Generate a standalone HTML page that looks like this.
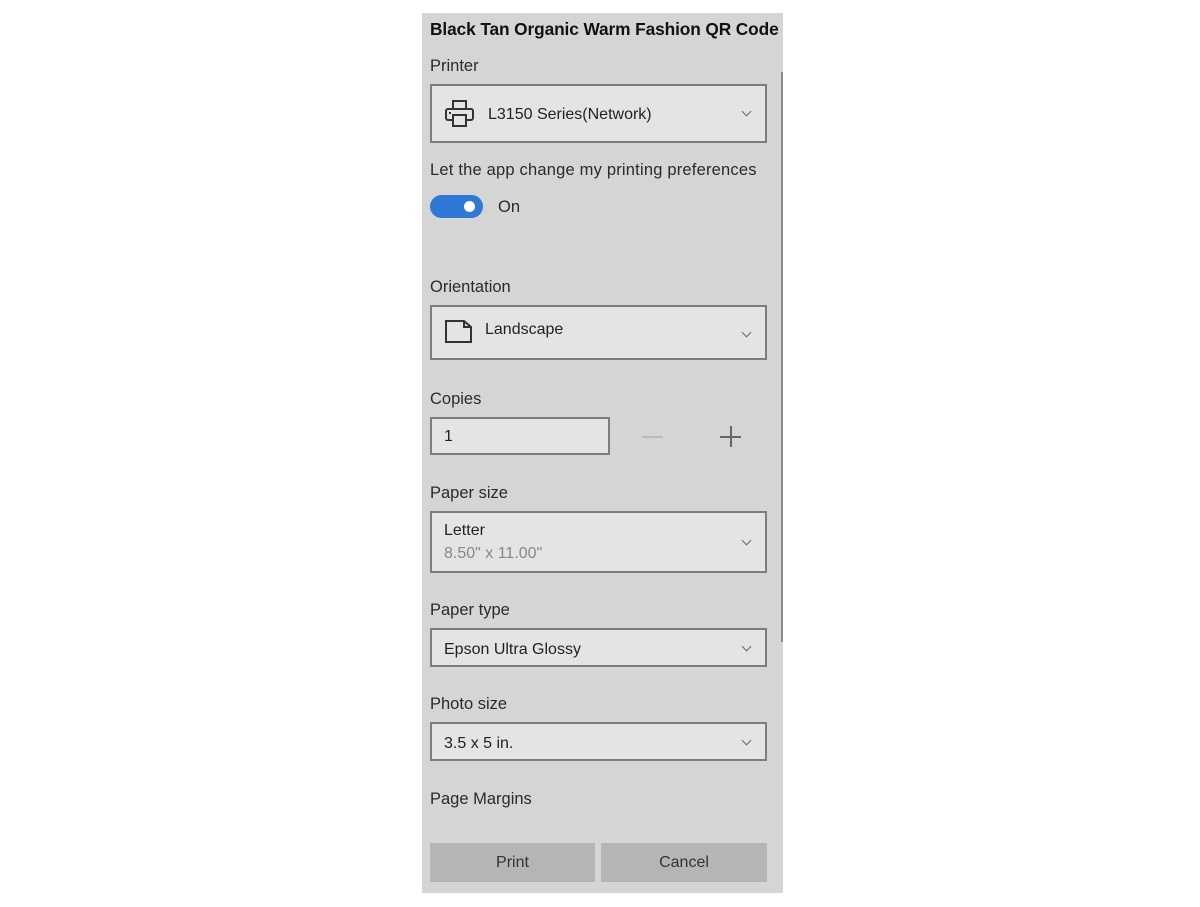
<!DOCTYPE html>
<html><head><style>
body{margin:0;width:1200px;height:907px;background:#fff;position:relative;overflow:hidden;font-family:"Liberation Sans",sans-serif;color:#222}
.p{position:absolute;left:422px;top:13px;width:361px;height:880px;background:#d5d5d5}
.a{position:absolute;white-space:nowrap}
.l{font-size:16.5px;color:#2a2a2a}
.box{position:absolute;left:430px;width:337px;background:#e4e4e4;border:2px solid #7d7d7d;box-sizing:border-box}
.chev{position:absolute;right:15px;width:6px;height:6px;border-right:1.3px solid #666;border-bottom:1.3px solid #666;transform:rotate(45deg)}
.t{font-size:16px;color:#222}
.btn{position:absolute;top:843px;height:39px;background:#b5b5b5;font-size:16px;color:#333;text-align:center;line-height:40px}
</style></head><body>
<div class="p"></div>
<div style="position:absolute;left:781px;top:72px;width:2px;height:570px;background:#8a8a8a"></div>
<div class="a" style="left:430px;top:19px;font-size:17.3px;font-weight:bold;color:#111;letter-spacing:-0.1px">Black Tan Organic Warm Fashion QR Code</div>
<div class="a l" style="left:430px;top:57px">Printer</div>
<div class="box" style="top:84px;height:59px"><div class="chev" style="top:22px"></div>
<svg style="position:absolute;left:12px;top:13px" width="32" height="30" viewBox="0 0 32 30" fill="none" stroke="#333" stroke-width="2"><rect x="9" y="2" width="13" height="8"/><rect x="2" y="10" width="27" height="11" rx="2"/><rect x="9" y="16" width="13" height="11" fill="#e4e4e4"/><line x1="5" y1="14" x2="7" y2="14"/></svg>
<div class="a t" style="left:56px;top:20px">L3150 Series(Network)</div></div>
<div class="a l" style="left:430px;top:161px;letter-spacing:0.2px">Let the app change my printing preferences</div>
<div style="position:absolute;left:430px;top:195px;width:53px;height:23px;border-radius:12px;background:#2f78d6"></div>
<div style="position:absolute;left:464px;top:201px;width:11px;height:11px;border-radius:50%;background:#fff"></div>
<div class="a l" style="left:498px;top:198px">On</div>
<div class="a l" style="left:430px;top:278px">Orientation</div>
<div class="box" style="top:305px;height:55px"><div class="chev" style="top:22px"></div>
<svg style="position:absolute;left:12px;top:12px" width="30" height="26" viewBox="0 0 30 26" fill="none" stroke="#333" stroke-width="2"><path d="M2 2H20L27 8V23H2Z"/><path d="M20 2V8H27"/></svg>
<div class="a t" style="left:53px;top:14px">Landscape</div></div>
<div class="a l" style="left:430px;top:390px">Copies</div>
<div class="box" style="top:417px;width:180px;height:38px"><div class="a t" style="left:12px;top:9px">1</div></div>
<div style="position:absolute;left:642px;top:436px;width:21px;height:1.5px;background:#bbb"></div>
<div style="position:absolute;left:720px;top:436px;width:21px;height:1.5px;background:#666"></div>
<div style="position:absolute;left:730px;top:426px;width:1.5px;height:21px;background:#666"></div>
<div class="a l" style="left:430px;top:484px">Paper size</div>
<div class="box" style="top:511px;height:62px"><div class="chev" style="top:24px"></div>
<div class="a t" style="left:12px;top:9px">Letter</div>
<div class="a t" style="left:12px;top:32px;color:#888">8.50" x 11.00"</div></div>
<div class="a l" style="left:430px;top:601px">Paper type</div>
<div class="box" style="top:628px;height:39px"><div class="chev" style="top:13px"></div><div class="a t" style="left:12px;top:11px">Epson Ultra Glossy</div></div>
<div class="a l" style="left:430px;top:695px">Photo size</div>
<div class="box" style="top:722px;height:39px"><div class="chev" style="top:13px"></div><div class="a t" style="left:12px;top:11px">3.5 x 5 in.</div></div>
<div class="a l" style="left:430px;top:790px">Page Margins</div>
<div class="btn" style="left:430px;width:165px">Print</div>
<div class="btn" style="left:601px;width:166px">Cancel</div>
</body></html>
